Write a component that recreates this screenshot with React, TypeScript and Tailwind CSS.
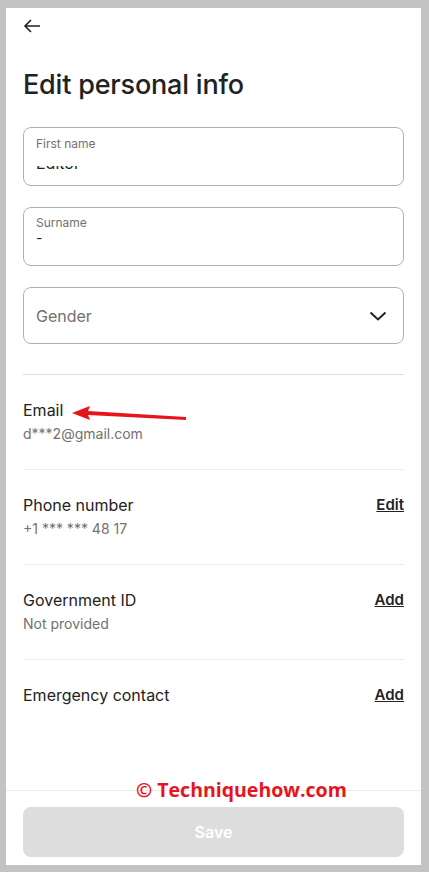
import React from "react";

const font = { fontFamily: "Inter, 'Noto Sans', sans-serif" };

function Row({ title, value, action }: { title: string; value?: string; action?: string }) {
  return (
    <div className="flex items-start justify-between pt-[25px] pb-[26px]">
      <div className="flex flex-col">
        <div className="text-[16px] leading-[20px] text-[#222222]">{title}</div>
        {value && <div className="mt-[5px] text-[14px] leading-[18px] text-[#717171]">{value}</div>}
      </div>
      {action && (
        <div className="text-[15px] leading-[20px] font-semibold underline text-[#222222]">{action}</div>
      )}
    </div>
  );
}

export default function App() {
  return (
    <div className="w-full h-[872px] bg-[#c3c3c3] pt-[8px] pl-[6px] pr-[8px] pb-[7px]" style={font}>
      <div className="relative flex flex-col h-full bg-white">
        <div className="flex-1 px-[17px]">
          <div className="pt-[10px] h-[28px]">
            <svg width="18" height="16" viewBox="0 0 18 16" fill="none" stroke="#222" strokeWidth="1.6">
              <path d="M17 8H2M8 2L2 8l6 6" />
            </svg>
          </div>
          <h1 className="mt-[33px] text-[27px] leading-[32px] font-medium text-[#222222] tracking-[-0.2px]">
            Edit personal info
          </h1>
          <div className="mt-[26px] h-[59px] rounded-[8px] border border-[#b0b0b0] px-[12px] pt-[8px]">
            <div className="text-[12px] leading-[16px] text-[#717171]">First name</div>
            <div className="mt-[14px] h-[5px] overflow-hidden">
              <div className="-mt-[11px] text-[16px] leading-[16px] text-[#222222]">Editor</div>
            </div>
          </div>
          <div className="mt-[21px] h-[59px] rounded-[8px] border border-[#b0b0b0] px-[12px] pt-[7px]">
            <div className="text-[12px] leading-[16px] text-[#717171]">Surname</div>
            <div className="text-[14px] leading-[14px] text-[#222222]">-</div>
          </div>
          <div className="mt-[21px] h-[57px] rounded-[8px] border border-[#b0b0b0] px-[12px] flex items-center justify-between">
            <div className="text-[16px] text-[#717171]">Gender</div>
            <svg width="18" height="10" viewBox="0 0 18 10" fill="none" stroke="#222" strokeWidth="2" className="mr-[4px]">
              <path d="M1.5 1.5L9 8.5l7.5-7" />
            </svg>
          </div>
          <div className="mt-[30px] border-t border-[#dddddd]" />
          <Row title="Email" value="d***2@gmail.com" />
          <div className="border-t border-[#ebebeb]" />
          <Row title="Phone number" value="+1 *** *** 48 17" action="Edit" />
          <div className="border-t border-[#ebebeb]" />
          <Row title="Government ID" value="Not provided" action="Add" />
          <div className="border-t border-[#ebebeb]" />
          <Row title="Emergency contact" action="Add" />
        </div>
        <div className="border-t border-[#ebebeb] px-[17px] pt-[16px] pb-[8px]">
          <div className="h-[50px] rounded-[8px] bg-[#dddddd] flex items-center justify-center text-white font-semibold text-[16px]">
            Save
          </div>
        </div>
        <svg className="absolute left-[64px] top-[395px]" width="117" height="20" viewBox="0 0 117 20">
          <path d="M2 10 L20 3 L18 8 L116 14 L116 17 L18 12 L20 17 Z" fill="#e8141b" />
        </svg>
        <div
          className="absolute left-[130px] top-[769px] text-[19.5px] leading-[26px] font-bold text-[#e8141b]"
          style={{ fontFamily: "'Open Sans', sans-serif" }}
        >
          © Techniquehow.com
        </div>
      </div>
    </div>
  );
}
